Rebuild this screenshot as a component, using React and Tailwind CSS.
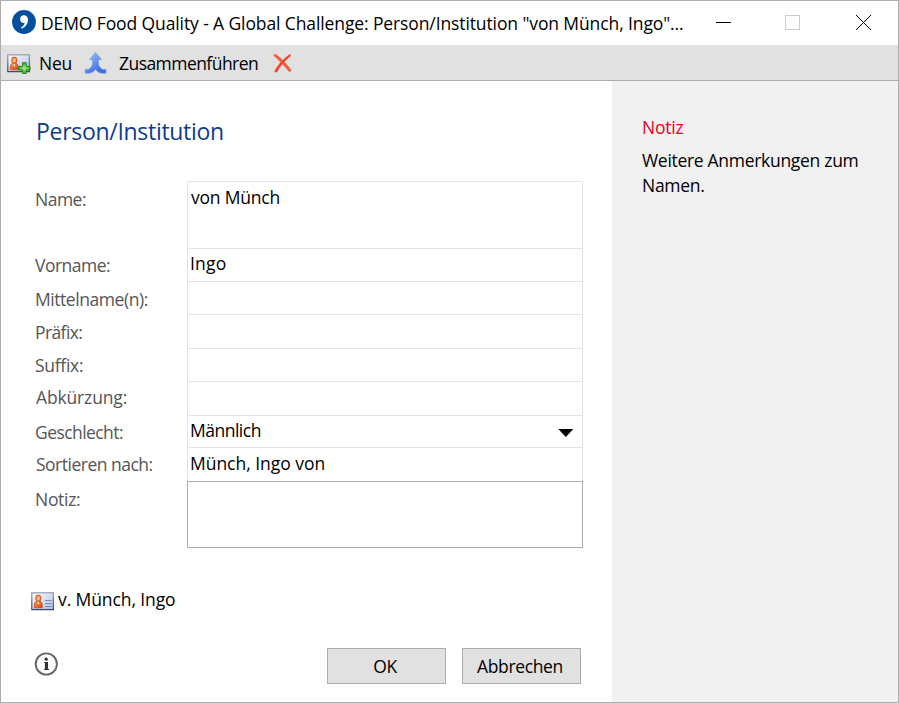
import React from "react";

function ContactGlyph({ plus }) {
  return (
    <svg width="24" height="20" viewBox="0 0 24 20" className="block shrink-0">
      <defs>
        <linearGradient id="cardFill" x1="0" y1="0" x2="1" y2="1">
          <stop offset="0" stopColor="#ffffff" />
          <stop offset="1" stopColor="#aebfe3" />
        </linearGradient>
        <linearGradient id="cardEdge" x1="0" y1="0" x2="0" y2="1">
          <stop offset="0" stopColor="#9aa3b5" />
          <stop offset="1" stopColor="#3f4a68" />
        </linearGradient>
        <linearGradient id="bust" x1="0" y1="0" x2="1" y2="1">
          <stop offset="0" stopColor="#f9a45c" />
          <stop offset="1" stopColor="#d93a0c" />
        </linearGradient>
        <radialGradient id="plusFill">
          <stop offset="0" stopColor="#a4ec85" />
          <stop offset="1" stopColor="#35b026" />
        </radialGradient>
      </defs>
      <rect x="0.8" y="0.8" width="21.600" height="16.800" fill="url(#cardFill)" stroke="url(#cardEdge)" strokeWidth="1.3" />
      <path d="M3.400 15.800c-.5-2.600.1-5.700 2-6.600h3.800c1.900.9 2.500 4 2 6.600z" fill="url(#bust)" stroke="#d0481e" strokeWidth="0.8" />
      <path d="M6.200 10.300l1.100 3.200 1.100-3.200z" fill="#ffdcae" />
      <ellipse cx="7.300" cy="6.300" rx="2.500" ry="2.900" fill="#fdb277" stroke="#dd5a22" strokeWidth="1.100" />
      {plus ? (
        <path
          d="M15.600 8.700h3.600v3.700h3.900v3.600h-3.900v3.500h-3.600v-3.500h-3.900v-3.600h3.900z"
          fill="url(#plusFill)"
          stroke="#2b8420"
          strokeWidth="1"
          strokeLinejoin="round"
        />
      ) : (
        <path d="M14 8.500h6.500M14 11.500h6.500M14 14.500h6.500" stroke="#7a88a4" strokeWidth="1" />
      )}
    </svg>
  );
}

function MergeGlyph() {
  return (
    <svg width="24" height="24" viewBox="0 0 24 24" className="block shrink-0">
      <defs>
        <linearGradient id="mergeFill" x1="0" y1="0" x2="0.6" y2="1">
          <stop offset="0" stopColor="#9cc3fd" />
          <stop offset="1" stopColor="#3a6cdc" />
        </linearGradient>
      </defs>
      <path
        d="M11.500 1.600L17.400 8.400H14.400V12C14.400 14.500 16.500 17.200 18.500 18.400H22V22.200H17.500C15.200 21.800 13 20.400 11.500 18.400C10 20.400 7.800 21.800 5.500 22.200H1.200V18.400H4.500C6.500 17.200 8.700 14.500 8.700 12V8.400H5.600Z"
        fill="url(#mergeFill)"
        stroke="#7a9ce6"
        strokeWidth="0.8"
        strokeLinejoin="round"
      />
    </svg>
  );
}

const rows = [
  { label: "Name:", value: "von Münch", row: "h-[67px]", lab: "pt-[6px] tracking-[-0.5px]", val: "pt-[3px] pl-[3px] tracking-[-0.2px]" },
  { label: "Vorname:", value: "Ingo", row: "h-[33px]", lab: "pt-[5px] tracking-[-0.5px]", val: "pt-[2px] pl-[2px] tracking-[0.2px]" },
  { label: "Mittelname(n):", value: "", row: "h-[33px]", lab: "pt-[6px] tracking-[-0.44px]", val: "" },
  { label: "Präfix:", value: "", row: "h-[34px]", lab: "pt-[6px] tracking-[-0.6px]", val: "" },
  { label: "Suffix:", value: "", row: "h-[33px]", lab: "pt-[5px] tracking-[-0.3px]", val: "" },
  { label: "Abkürzung:", value: "", row: "h-[34px]", lab: "pt-[4px] pl-[1px] tracking-[-0.15px]", val: "" },
  { label: "Geschlecht:", value: "Männlich", row: "h-[32px]", lab: "pt-[5px] tracking-[-0.57px]", val: "pt-[2px] pl-[2px] tracking-[-0.5px]", select: true },
  { label: "Sortieren nach:", value: "Münch, Ingo von", row: "h-[34px]", lab: "pt-[5px] pl-[1px] tracking-[-0.5px]", val: "pt-[3px] pl-[2px] tracking-[-0.03px]" },
];

export default function App() {
  return (
    <div className="flex h-[703px] w-[899px] flex-col overflow-hidden border border-[#adadad] bg-white font-['Open_Sans','Noto_Sans',sans-serif] text-[17.5px] leading-[24px] tracking-[-0.3px] text-black">
      <header className="flex h-[44px] shrink-0 items-center pl-[11px]">
        <svg width="24" height="24" viewBox="0 0 24 24" className="mb-[2px] shrink-0">
          <circle cx="12" cy="12" r="11.900" fill="#0150a0" />
          <path d="M11.800 5.200c2.600 0 4.200 1.800 4.200 4.600 0 4.200-2.600 7.700-6.200 8.900l-.8-1.300c2.200-1.100 3.500-2.700 3.600-4.600-.3.100-.6.200-1 .200-2 0-3.500-1.500-3.500-3.800 0-2.400 1.600-4 3.700-4z" fill="#fff" />
        </svg>
        <h1 className="ml-[5px] w-[660px] whitespace-nowrap tracking-[-0.11px]">
          DEMO Food Quality - A Global Challenge: Person/Institution "von Münch, Ingo"...
        </h1>
        <svg width="160" height="24" viewBox="0 0 160 24" className="ml-[14px] shrink-0" fill="none" shapeRendering="crispEdges">
          <path d="M1 11.500h15" stroke="#000" />
          <rect x="70.500" y="4.500" width="14" height="14" stroke="#ccc" />
          <path d="M141 4l15 15M156 4l-15 15" stroke="#000" shapeRendering="auto" />
        </svg>
      </header>

      <nav className="flex h-[36px] shrink-0 items-center border-b border-[#adadad] bg-[#e1e1e1] pl-[6px]">
        <div className="pt-[3px]"><ContactGlyph plus /></div>
        <span className="ml-[8px] w-[45px] pt-[1px]">Neu</span>
        <MergeGlyph />
        <span className="ml-[11px] w-[153px] pt-[1px] tracking-[-0.55px]">Zusammenführen</span>
        <svg width="22" height="22" viewBox="0 0 22 22" className="mt-[2px]">
          <path d="M1.500 2.300L3.600 1.300C8.500 4.500 15.500 12 19.300 17.500L17.300 18.800C13 13.500 6.500 6.500 1.500 2.300Z" fill="#f4573b" stroke="#f6705a" strokeWidth="0.8" strokeLinejoin="round" />
          <path d="M17.500 1.500L19 2.600C13 7.500 8 13 4.800 19.300L2.300 18.500C5.500 12.500 11 6.300 17.500 1.500Z" fill="#f0391f" stroke="#f6705a" strokeWidth="0.8" strokeLinejoin="round" />
        </svg>
      </nav>

      <div className="flex min-h-0 flex-1">
        <main className="flex w-[611px] flex-col">
          <h2 className="ml-[35px] mt-[34px] h-[66px] text-[23px] leading-[32px] text-[#0f3c8c]">Person/Institution</h2>

          <div className="flex flex-col pl-[34px]">
            {rows.map((r) => (
              <div key={r.label} className={`flex ${r.row}`}>
                <div className={`w-[152px] text-[#555] ${r.lab}`}>{r.label}</div>
                <div className={`flex w-[396px] justify-between border-x border-t border-[#e3e3e3] ${r.val}`}>
                  <span>{r.value}</span>
                  {r.select && (
                    <svg width="16" height="8" viewBox="0 0 16 8" className="mr-[8px] mt-[11px]">
                      <path d="M0.300 0h15L7.800 8z" fill="#000" />
                    </svg>
                  )}
                </div>
              </div>
            ))}
            <div className="flex h-[67px]">
              <div className="w-[152px] pt-[6px] text-[#555]">Notiz:</div>
              <div className="w-[396px] border border-[#adadad]" />
            </div>
          </div>

          <div className="ml-[30px] mt-[39px] flex h-[24px] items-center">
            <div className="pt-[6px]"><ContactGlyph /></div>
            <span className="ml-[3px] tracking-[-0.1px]">v. Münch, Ingo</span>
          </div>

          <div className="mt-[37px] flex h-[36px] items-center pl-[33px]">
            <svg width="24" height="24" viewBox="0 0 24 24" className="mb-[4px] shrink-0">
              <circle cx="12.300" cy="12" r="10.600" fill="none" stroke="#666" strokeWidth="1.900" />
              <circle cx="12.200" cy="7.200" r="1.600" fill="#333" />
              <path d="M10.100 10.100h3.900v6.900h1v1h-5v-1h.9v-5.900h-.8z" fill="#333" />
            </svg>
            <button className="ml-[269px] h-[36px] w-[119px] border border-[#adadad] bg-[#e1e1e1] pr-[3px]">OK</button>
            <button className="ml-[16px] h-[36px] w-[119px] border border-[#adadad] bg-[#e1e1e1] pr-[3px] tracking-[-0.35px]">Abbrechen</button>
          </div>
        </main>

        <aside className="flex-1 bg-[#f1f1f1] pl-[30px] pt-[34px]">
          <h3 className="tracking-[-0.2px] text-[#e8001c]">Notiz</h3>
          <p className="mt-[9px] leading-[25px]">
            Weitere Anmerkungen zum
            <br />
            Namen.
          </p>
        </aside>
      </div>
    </div>
  );
}
